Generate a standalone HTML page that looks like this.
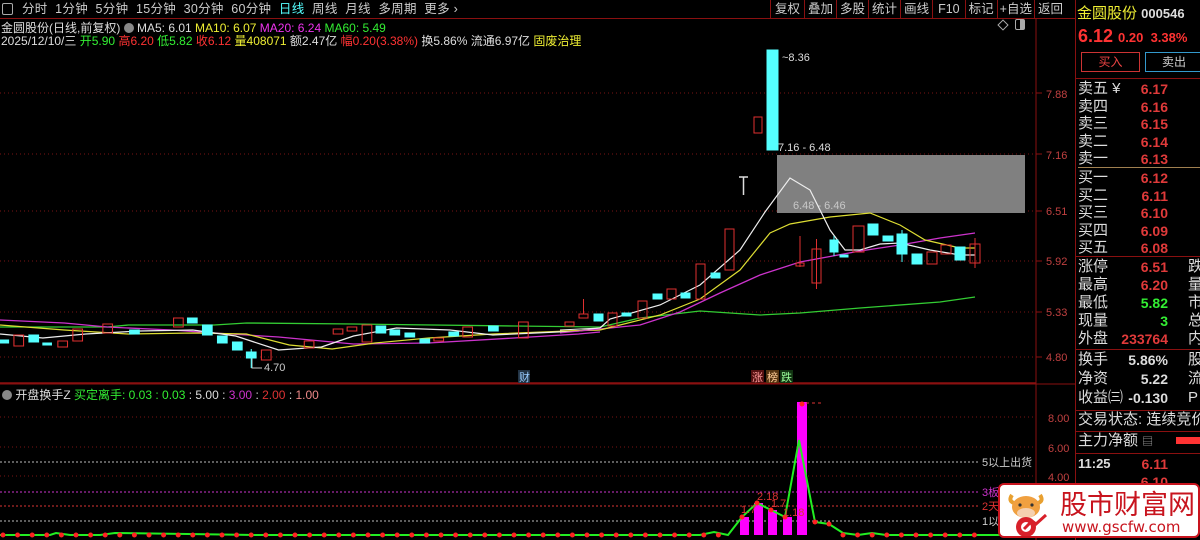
<!DOCTYPE html>
<html><head><meta charset="utf-8"><style>
*{margin:0;padding:0;box-sizing:border-box}
body{width:1200px;height:540px;background:#000;overflow:hidden;position:relative;font-family:"Liberation Sans","Noto Sans CJK SC",sans-serif;font-size:12px;color:#ddd}
.a{position:absolute;white-space:nowrap}
.tab{top:0;height:18px;line-height:18px;font-size:12.5px;color:#ccc}
.rp{position:absolute;left:1076px;width:124px;font-size:14px;overflow:hidden}
.row{position:absolute;left:2px;width:122px;height:20px;line-height:20px;color:#ddd;font-size:15px;overflow:hidden;white-space:nowrap}
.row b{position:absolute;right:32px;font-weight:bold;color:#e03a3a;font-family:"Liberation Sans",sans-serif;font-size:14px}
.row i{position:absolute;left:110px;font-style:normal}
</style></head><body>
<div class="a" style="left:0;top:18px;width:1075px;height:1px;background:#8a1010"></div>
<div class="a" style="left:2px;top:3px;width:11px;height:12px;border:1px solid #aaa;border-radius:2px"></div>
<div class="a tab" style="left:22px;letter-spacing:0.3px">分时&nbsp;&nbsp;1分钟&nbsp;&nbsp;5分钟&nbsp;&nbsp;15分钟&nbsp;&nbsp;30分钟&nbsp;&nbsp;60分钟&nbsp;&nbsp;<span style="color:#5ff">日线</span>&nbsp;&nbsp;周线&nbsp;&nbsp;月线&nbsp;&nbsp;多周期&nbsp;&nbsp;更多 ›</div>
<div class="a tab" style="left:770px;width:305px;display:flex">
<span style="border-left:1px solid #8a1010;padding:0 4px">复权</span><span style="border-left:1px solid #8a1010;padding:0 3px">叠加</span><span style="border-left:1px solid #8a1010;padding:0 3px">多股</span><span style="border-left:1px solid #8a1010;padding:0 3px">统计</span><span style="border-left:1px solid #8a1010;padding:0 3px">画线</span><span style="border-left:1px solid #8a1010;padding:0 5px">F10</span><span style="border-left:1px solid #8a1010;padding:0 3px">标记</span><span style="border-left:1px solid #8a1010;padding:0 2px">+自选</span><span style="border-left:1px solid #8a1010;padding:0 3px">返回</span></div>
<div class="a" style="left:1px;top:19px;font-size:12px;color:#ddd">金圆股份(日线,前复权) <span style="display:inline-block;width:10px;height:10px;border-radius:5px;background:#888;vertical-align:-1px"></span> MA5: 6.01 <span style="color:#ee3">MA10: 6.07</span> <span style="color:#e3e">MA20: 6.24</span> <span style="color:#3e3">MA60: 5.49</span></div>
<div class="a" style="left:1px;top:32px;font-size:12px;color:#ddd">2025/12/10/三 <span style="color:#3e3">开5.90</span> <span style="color:#f33">高6.20</span> <span style="color:#3e3">低5.82</span> <span style="color:#f33">收6.12</span> <span style="color:#ee3">量408071</span> 额2.47亿 <span style="color:#f33">幅0.20(3.38%)</span> 换5.86% 流通6.97亿 <span style="color:#ee3">固废治理</span></div>
<div class="a" style="left:999px;top:21px;width:8px;height:8px;border:1px solid #aaa;transform:rotate(45deg)"></div>
<div class="a" style="left:1015px;top:19px;width:10px;height:11px;border:1px solid #aaa;border-radius:2px;background:linear-gradient(90deg,#000 50%,#aaa 50%)"></div>

<svg class="a" style="left:0;top:0" width="1076" height="540" viewBox="0 0 1076 540">
<g stroke="#7a1414" stroke-dasharray="1 3" stroke-width="1">
<line x1="0" y1="93" x2="1036" y2="93"/><line x1="0" y1="154" x2="1036" y2="154"/><line x1="0" y1="211" x2="1036" y2="211"/><line x1="0" y1="261" x2="1036" y2="261"/><line x1="0" y1="312" x2="1036" y2="312"/><line x1="0" y1="357" x2="1036" y2="357"/>
<line x1="0" y1="417" x2="1036" y2="417"/><line x1="0" y1="447" x2="1036" y2="447"/><line x1="0" y1="476" x2="1036" y2="476"/>
</g>
<line x1="1036" y1="19" x2="1036" y2="540" stroke="#8a1010"/>
<line x1="0" y1="383" x2="1036" y2="383" stroke="#8a1010" stroke-width="1.5"/>
<line x1="0" y1="384" x2="1075" y2="384" stroke="#8a1010"/>
<g fill="#c04040" font-size="11">
<text x="1046" y="98">7.88</text><text x="1046" y="159">7.16</text><text x="1046" y="215">6.51</text><text x="1046" y="265">5.92</text><text x="1046" y="316">5.33</text><text x="1046" y="361">4.80</text>
<text x="1048" y="422">8.00</text><text x="1048" y="452">6.00</text><text x="1048" y="481">4.00</text>
</g>
<g stroke="#8a1010"><line x1="1036" y1="93" x2="1042" y2="93"/><line x1="1036" y1="154" x2="1042" y2="154"/><line x1="1036" y1="211" x2="1042" y2="211"/><line x1="1036" y1="261" x2="1042" y2="261"/><line x1="1036" y1="312" x2="1042" y2="312"/><line x1="1036" y1="357" x2="1042" y2="357"/></g>
<rect x="777" y="155" width="248" height="58" fill="#808080"/>
<text x="778" y="151" fill="#ddd" font-size="11">7.16 - 6.48</text>
<text x="793" y="209" fill="#c8c8c8" font-size="11">6.48 - 6.46</text>
<text x="782" y="61" fill="#ddd" font-size="11">~8.36</text>
<text x="264" y="371" fill="#ccc" font-size="11">4.70</text>
<path d="M252 355V368H262" stroke="#ccc" fill="none"/>
<path d="M739 177H748M743.5 177V195" stroke="#ddd" stroke-width="1.5"/>
<g transform="scale(1.0714,1)">
<polyline fill="none" stroke="#3c3" stroke-width="1.3" points="0,327 100,327 120,325 200,325 230,323 330,324 480,326 560,327"/>
<polyline fill="none" stroke="#c3c" stroke-width="1.3" points="0,320 60,323 100,327 160,330 200,333 260,337 330,344 400,343 480,338 540,334 560,332"/>
<polyline fill="none" stroke="#dd3" stroke-width="1.2" points="0,325 60,330 120,334 180,333 230,334 270,345 310,349 350,343 400,338 460,334 530,331 560,330"/>
<polyline fill="none" stroke="#eee" stroke-width="1.2" points="0,334 40,338 80,334 130,331 180,330 220,336 260,350 300,347 330,336 370,328 420,330 460,335 500,333 540,331 560,328"/>
</g>
<polyline fill="none" stroke="#3c3" stroke-width="1.3" points="600,327 640,318 700,311 760,315 800,313 860,308 940,302 975,297"/>
<polyline fill="none" stroke="#c3c" stroke-width="1.3" points="600,329 640,325 680,312 720,293 760,275 800,262 860,251 900,245 940,238 975,233"/>
<polyline fill="none" stroke="#dd3" stroke-width="1.2" points="600,330 620,325 660,315 700,299 740,270 770,233 790,224 830,217 870,213 900,225 925,240 960,248 975,248"/>
<polyline fill="none" stroke="#eee" stroke-width="1.2" points="600,328 610,319 660,305 700,285 740,250 765,212 790,178 810,190 830,230 845,250 860,250 880,244 900,243 930,250 960,255 975,255"/>
<line x1="560" y1="330" x2="600" y2="328" stroke="#eee"/><line x1="560" y1="331" x2="600" y2="330" stroke="#dd3"/><line x1="560" y1="333" x2="600" y2="329" stroke="#c3c"/>
<g transform="scale(1.0714,1)">
<g fill="#5ff" stroke="#5ff">
<rect x="0" y="340" width="8" height="3"/><rect x="27" y="335" width="9" height="7"/><rect x="40" y="343" width="8" height="2"/><rect x="121" y="330" width="9" height="4"/><rect x="175" y="318" width="9" height="5"/><rect x="189" y="325" width="9" height="10"/><rect x="203" y="336" width="9" height="7"/><rect x="217" y="342" width="9" height="8"/><rect x="230" y="352" width="9" height="6"/><line x1="234.5" y1="349" x2="234.5" y2="368"/><rect x="351" y="326" width="9" height="7"/><rect x="364" y="330" width="9" height="5"/><rect x="378" y="333" width="9" height="4"/><rect x="392" y="339" width="9" height="4"/><rect x="419" y="332" width="9" height="4"/><rect x="456" y="326" width="9" height="5"/>
</g>
<g fill="none" stroke="#e03030">
<rect x="13" y="335" width="9" height="11"/><rect x="54" y="341" width="9" height="6"/><rect x="68" y="329" width="9" height="12"/><rect x="96" y="324" width="9" height="9"/><rect x="162" y="318" width="9" height="9"/><rect x="244" y="350" width="9" height="10"/><rect x="284" y="341" width="9" height="7"/><rect x="311" y="329" width="9" height="5"/><rect x="324" y="327" width="9" height="4"/><rect x="338" y="325" width="9" height="17"/><rect x="405" y="338" width="9" height="3"/><rect x="432" y="327" width="9" height="10"/><rect x="484" y="322" width="9" height="16"/>
</g></g>
<g fill="#5ff" stroke="#5ff">
<rect x="594" y="314" width="9" height="7"/><rect x="622" y="313" width="9" height="3"/><rect x="653" y="294" width="9" height="5"/><rect x="681" y="293" width="9" height="5"/><rect x="711" y="273" width="9" height="5"/><rect x="767" y="50" width="11" height="100"/><rect x="830" y="240" width="8" height="12"/><line x1="834" y1="236" x2="834" y2="256"/><rect x="840" y="255" width="8" height="2"/><rect x="868" y="224" width="10" height="11"/><rect x="883" y="236" width="10" height="5"/><rect x="897" y="234" width="10" height="20"/><line x1="902" y1="230" x2="902" y2="262"/><rect x="912" y="254" width="10" height="10"/><rect x="955" y="247" width="10" height="13"/>
</g>
<g fill="none" stroke="#e03030">
<rect x="565" y="322" width="9" height="4"/><rect x="579" y="314" width="9" height="4"/><line x1="583.5" y1="299" x2="583.5" y2="314"/><rect x="608" y="313" width="9" height="13"/><rect x="638" y="301" width="9" height="17"/><rect x="667" y="289" width="9" height="10"/><rect x="696" y="264" width="9" height="35"/><rect x="725" y="229" width="9" height="41"/><rect x="754" y="117" width="8" height="16"/><rect x="796" y="263" width="8" height="3"/><line x1="800" y1="236" x2="800" y2="267"/><rect x="812" y="249" width="9" height="34"/><line x1="816.5" y1="239" x2="816.5" y2="289"/><rect x="853" y="226" width="11" height="26"/><rect x="927" y="252" width="10" height="12"/><rect x="941" y="245" width="10" height="9"/><rect x="970" y="244" width="10" height="19"/><line x1="975" y1="238" x2="975" y2="268"/>
</g>
<g font-size="11"><rect x="518" y="370" width="12" height="13" fill="#234"/><text x="519" y="381" fill="#9cf">财</text>
<rect x="751" y="370" width="13" height="13" fill="#511"/><text x="752" y="381" fill="#f99">涨</text><rect x="766" y="370" width="13" height="13" fill="#531"/><text x="767" y="381" fill="#fc9">榜</text><rect x="780" y="370" width="13" height="13" fill="#131"/><text x="781" y="381" fill="#9f9">跌</text></g>
<g stroke-dasharray="2 2" stroke-width="1">
<line x1="0" y1="462" x2="980" y2="462" stroke="#bbb"/>
<line x1="0" y1="492" x2="980" y2="492" stroke="#c3c"/>
<line x1="0" y1="506" x2="980" y2="506" stroke="#d33"/>
<line x1="0" y1="521" x2="980" y2="521" stroke="#bbb"/>
</g>
<g font-size="11"><text x="982" y="466" fill="#ccc">5以上出货</text><text x="982" y="496" fill="#c3c">3板</text><text x="982" y="510" fill="#d33">2天</text><text x="982" y="525" fill="#ccc">1以</text></g>
<g fill="#f0f"><rect x="740" y="517" width="9" height="18"/><rect x="754" y="503" width="9" height="32"/><rect x="768" y="510" width="9" height="25"/><rect x="783" y="517" width="9" height="18"/><rect x="797" y="402" width="10" height="133"/></g>
<polyline fill="none" stroke="#2e2" stroke-width="2" points="0,535 50,535 56,533 70,535 100,535 115,533 255,535 330,535 560,535 700,535 714,532 728,535 742,517 757,503 771,510 785,517 799,440 815,522 829,524 843,533 858,535 872,533 886,535 1000,535"/>
<line x1="3" y1="535" x2="730" y2="535" stroke="#f22" stroke-width="5" stroke-linecap="round" stroke-dasharray="0 14.6"/>
<line x1="843" y1="535" x2="980" y2="535" stroke="#f22" stroke-width="5" stroke-linecap="round" stroke-dasharray="0 14.6"/>
<g fill="#f22"><circle cx="742" cy="517" r="2.5"/><circle cx="757" cy="503" r="2.5"/><circle cx="771" cy="510" r="2.5"/><circle cx="785" cy="517" r="2.5"/><circle cx="802" cy="404" r="2.5"/><circle cx="815" cy="522" r="2.5"/><circle cx="829" cy="524" r="2.5"/></g>
<line x1="806" y1="403" x2="822" y2="403" stroke="#d33" stroke-dasharray="3 3"/>
<g font-size="11" fill="#d33"><text x="741" y="513">1.7</text><text x="757" y="500">2.18</text><text x="771" y="507">1.7</text><text x="783" y="516">1.18</text></g>
</svg>
<div class="a" style="left:2px;top:386px;font-size:12px;color:#ddd"><span style="display:inline-block;width:10px;height:10px;border-radius:5px;background:#888;vertical-align:-1px"></span> 开盘换手Z <span style="color:#3e3">买定离手: 0.03 : 0.03</span> : 5.00 : <span style="color:#c3c">3.00</span> : <span style="color:#d33">2.00</span> : <span style="color:#e88">1.00</span></div>

<div class="a" style="left:1075px;top:0;width:1px;height:540px;background:#8a1010"></div>
<div class="rp" style="top:0;height:540px">
<div class="a" style="left:1px;top:2px;font-size:15px;color:#ee3">金圆股份 <span style="font-size:13px;color:#ddd;font-weight:bold">000546</span></div>
<div class="a" style="left:2px;top:26px;font-size:18px;font-weight:bold;color:#f33">6.12 <span style="font-size:13px">0.20&nbsp; 3.38%</span></div>
<div class="a" style="left:5px;top:52px;width:59px;height:20px;border:1px solid #c33;color:#e44;text-align:center;line-height:18px;font-size:12px">买入</div>
<div class="a" style="left:69px;top:52px;height:20px;border:1px solid #39c;color:#ccc;text-align:center;line-height:18px;font-size:12px;width:58px">卖出</div>
<div class="a" style="left:0;top:78px;width:124px;height:1px;background:#8a1010"></div>
<div class="row" style="top:79px">卖五 ¥<b>6.17</b></div>
<div class="row" style="top:97px">卖四<b>6.16</b></div>
<div class="row" style="top:114px">卖三<b>6.15</b></div>
<div class="row" style="top:132px">卖二<b>6.14</b></div>
<div class="row" style="top:149px">卖一<b>6.13</b></div>
<div class="a" style="left:2px;top:167px;width:122px;height:1px;background:#a08050"></div>
<div class="row" style="top:168px">买一<b>6.12</b></div>
<div class="row" style="top:186px">买二<b>6.11</b></div>
<div class="row" style="top:203px">买三<b>6.10</b></div>
<div class="row" style="top:221px">买四<b>6.09</b></div>
<div class="row" style="top:238px">买五<b>6.08</b></div>
<div class="a" style="left:0;top:256px;width:124px;height:1px;background:#8a1010"></div>
<div class="row" style="top:257px">涨停<b>6.51</b><i>跌</i></div>
<div class="row" style="top:275px">最高<b>6.20</b><i>量</i></div>
<div class="row" style="top:293px">最低<b style="color:#3e3">5.82</b><i>市</i></div>
<div class="row" style="top:311px">现量<b style="color:#3e3">3</b><i>总</i></div>
<div class="row" style="top:329px">外盘<b>233764</b><i>内</i></div>
<div class="a" style="left:0;top:349px;width:124px;height:1px;background:#8a1010"></div>
<div class="row" style="top:350px">换手<b style="color:#ddd">5.86%</b><i>股</i></div>
<div class="row" style="top:369px">净资<b style="color:#ddd">5.22</b><i>流</i></div>
<div class="row" style="top:388px">收益㈢<b style="color:#ddd">-0.130</b><i>P</i></div>
<div class="a" style="left:0;top:410px;width:124px;height:1px;background:#8a1010"></div>
<div class="row" style="top:410px">交易状态: 连续竞价</div>
<div class="a" style="left:0;top:431px;width:124px;height:1px;background:#8a1010"></div>
<div class="row" style="top:431px">主力净额 <span style="font-size:11px;color:#aaa">▤</span><span style="position:absolute;left:98px;top:6px;width:24px;height:7px;background:#f33"></span></div>
<div class="a" style="left:0;top:453px;width:124px;height:1px;background:#8a1010"></div>
<div class="row" style="top:454px;font-weight:bold;font-size:13px">11:25<b>6.11</b></div>
<div class="row" style="top:472px"><b>6.10</b></div>
</div>
<div class="a" style="left:998px;top:483px;width:202px;height:55px;background:#fff;border:2px solid #c8141e;border-radius:6px;overflow:hidden">
<svg class="a" style="left:2px;top:2px" width="50" height="50" viewBox="0 0 50 50">
<path d="M10 8Q6 14 12 16M38 8Q42 14 36 16" stroke="#e8a030" stroke-width="4" fill="none"/>
<ellipse cx="24" cy="20" rx="14" ry="11" fill="#f0a040"/>
<ellipse cx="24" cy="26" rx="9" ry="5" fill="#f5d0b0"/>
<circle cx="18" cy="18" r="1.6" fill="#333"/><circle cx="30" cy="18" r="1.6" fill="#333"/>
<circle cx="24" cy="40" r="10" fill="#d8202a"/><circle cx="24" cy="40" r="5" fill="#fff"/>
<path d="M22 42L30 34L34 37L44 28" stroke="#d8202a" stroke-width="3" fill="none"/>
</svg>
<div class="a" style="left:60px;top:3px;font-size:27px;color:#c8141e;font-family:'Noto Sans CJK SC',sans-serif;line-height:30px">股市财富网</div>
<div class="a" style="left:62px;top:33px;font-size:15px;color:#c8141e;font-family:'DejaVu Sans',sans-serif">www.gscfw.com</div>
</div>
</body></html>
